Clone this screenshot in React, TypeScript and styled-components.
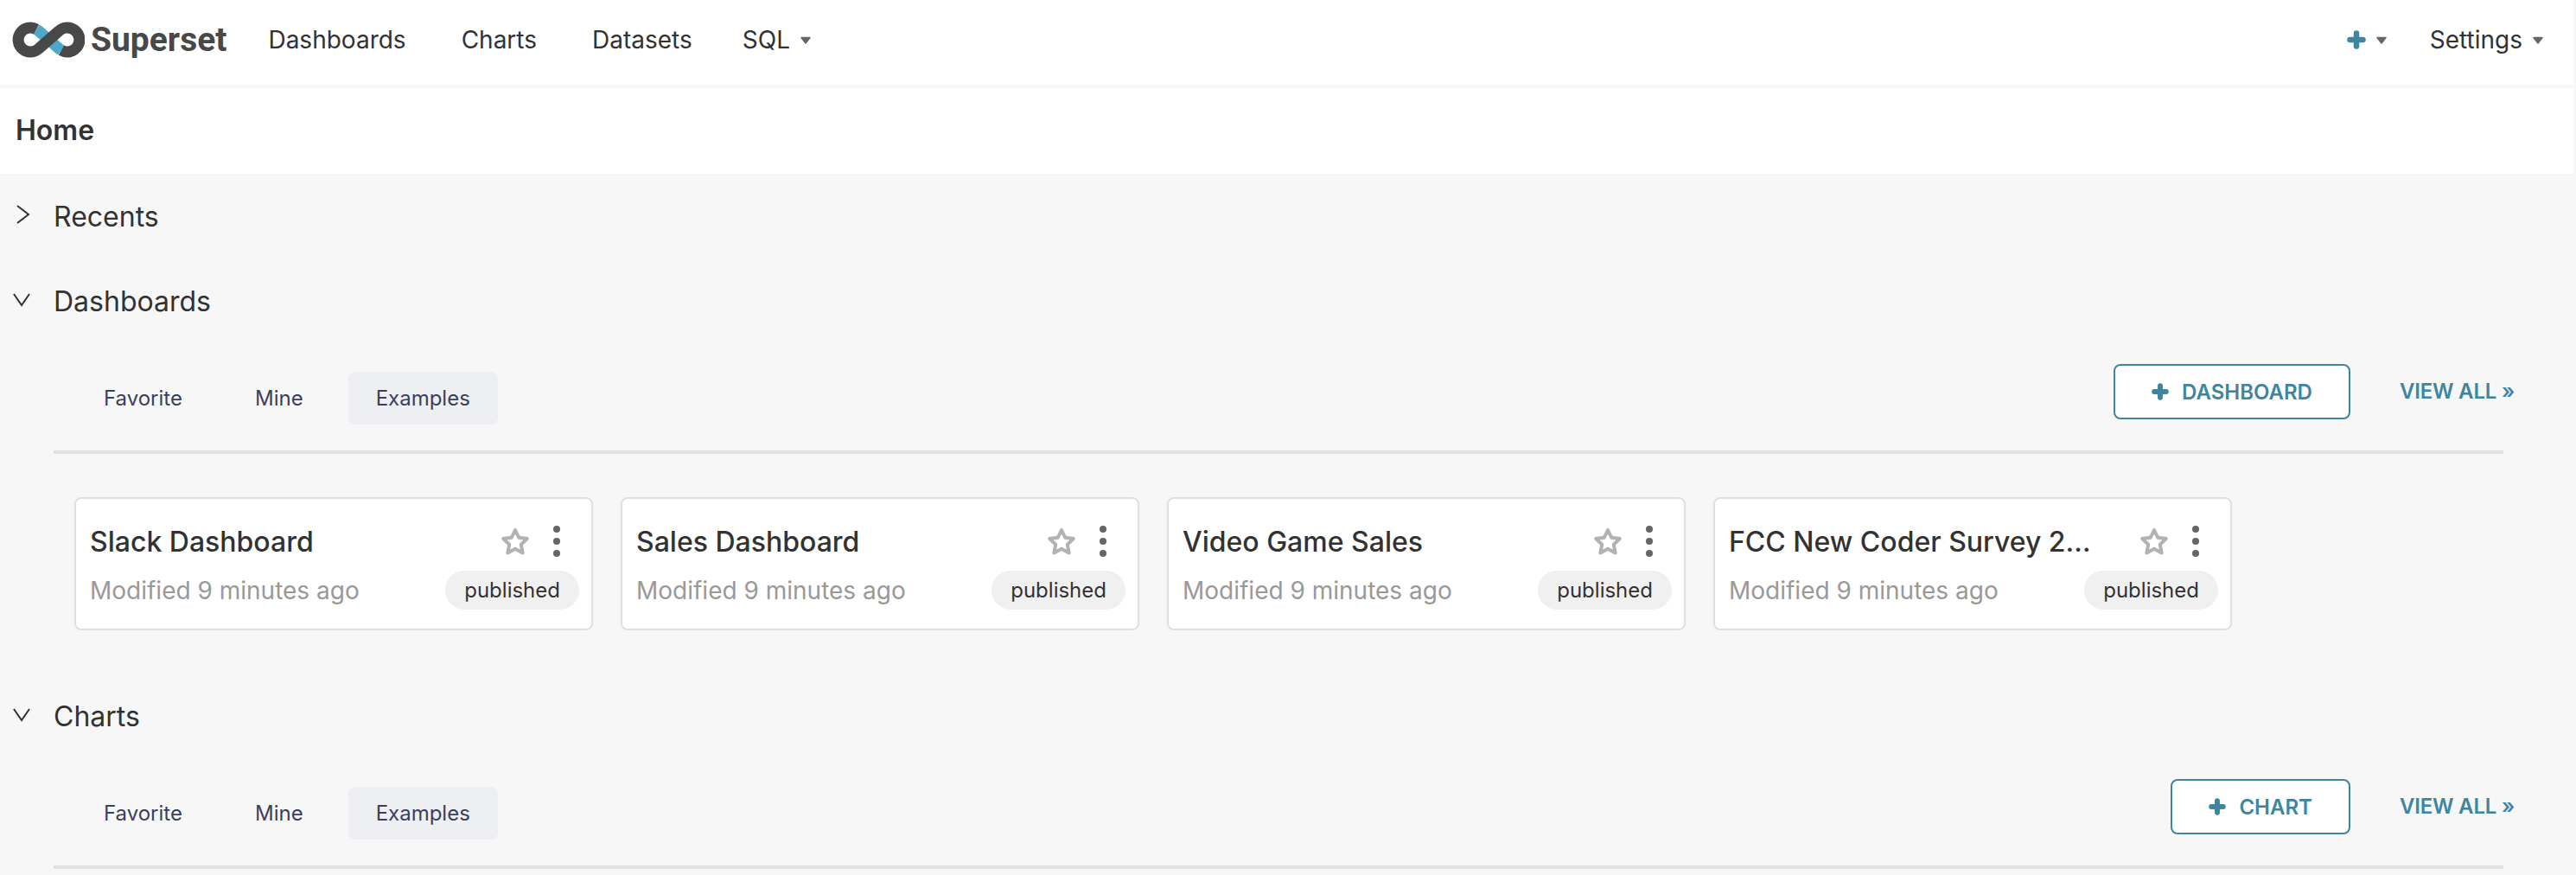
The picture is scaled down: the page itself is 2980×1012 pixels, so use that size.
import styled, { createGlobalStyle } from "styled-components";

const GlobalStyle = createGlobalStyle`
    html, body {
        margin: 0;
        background-color: #f7f7f7;
        overflow: hidden;
    }
    * {
        box-sizing: border-box;
    }
`;

const primary = "#3e86a0";

const Page = styled.div`
    width: 2977px;
    height: 1012px;
    overflow: hidden;
    font-family: Inter, "Liberation Sans", sans-serif;
    color: #323232;
`;

const TopNav = styled.header`
    display: flex;
    align-items: center;
    height: 102px;
    padding: 0 35px 6px 14px;
    background-color: #fff;
    border-bottom: 4px solid #f7f7f7;
`;

const Brand = styled.div`
    display: flex;
    align-items: center;
    gap: 7px;
    margin-right: 48px;
    font-family: Roboto, sans-serif;
    font-weight: 700;
    font-size: 39px;
    color: #484848;
    line-height: 1;
`;

const NavLink = styled.a<{ $gap?: number }>`
    display: flex;
    align-items: center;
    gap: 12px;
    font-size: 28px;
    margin-right: ${(p) => p.$gap ?? 0}px;
    color: #323232;
`;

const Spacer = styled.div`
    flex: 1;
`;

const SubHeader = styled.div`
    display: flex;
    align-items: center;
    height: 99px;
    padding: 0 0 3px 18px;
    background-color: #fff;
    font-size: 32px;
    font-weight: 600;
`;

const SectionHead = styled.div`
    display: flex;
    align-items: center;
    height: 98px;
    padding-left: 62px;
    position: relative;
    font-size: 32px;
`;

const ChevronSlot = styled.span<{ $top: number }>`
    position: absolute;
    left: 14px;
    top: ${(p) => p.$top}px;
    display: flex;
`;

const Section = styled.section`
    height: 480px;
`;

const ActionRow = styled.div`
    display: flex;
    align-items: flex-start;
    height: 104px;
    margin: 24px 81px 0 62px;
    padding-left: 26px;
    border-bottom: 4px solid #e0e0e0;
`;

const Tabs = styled.div`
    display: flex;
    gap: 20px;
    margin-top: 9px;
`;

const Tab = styled.div<{ $active?: boolean }>`
    height: 61px;
    line-height: 61px;
    padding: 0 32px;
    font-size: 24px;
    color: #3a3f5c;
    border-radius: 8px;
    background-color: ${(p) => (p.$active ? "#eeeff3" : "transparent")};
`;

const AddButton = styled.div`
    display: flex;
    align-items: center;
    justify-content: center;
    gap: 15px;
    height: 64px;
    padding: 0 42px;
    background-color: #fff;
    border: 2px solid ${primary};
    border-radius: 8px;
    color: ${primary};
    font-size: 24px;
    font-weight: 600;
`;

const ViewAll = styled.a`
    height: 64px;
    line-height: 63px;
    margin: 0 -13px 0 57px;
    font-size: 24px;
    font-weight: 600;
    letter-spacing: -0.2px;
    color: ${primary};
    white-space: nowrap;
`;

const CardRow = styled.div`
    display: flex;
    gap: 32px;
    margin: 50px 0 0 86px;
`;

const Card = styled.article`
    width: 600px;
    height: 154px;
    padding: 24px 14px 0 16px;
    background-color: #fff;
    border: 2px solid #e0e0e0;
    border-radius: 8px;
`;

const CardTop = styled.div`
    display: flex;
    align-items: center;
    height: 50px;
`;

const CardTitle = styled.div`
    width: 428px;
    font-size: 32px;
    font-weight: 500;
    color: #323232;
    white-space: nowrap;
    overflow: hidden;
    text-overflow: ellipsis;
`;

const CardActions = styled.div`
    display: flex;
    align-items: center;
    gap: 27px;
    margin-left: auto;
    margin-right: 22px;
`;

const CardBottom = styled.div`
    display: flex;
    align-items: center;
    justify-content: space-between;
    margin-top: 9px;
`;

const Modified = styled.span`
    font-size: 28px;
    color: #999;
`;

const Published = styled.span`
    height: 45px;
    line-height: 45px;
    padding: 0 22px;
    border-radius: 23px;
    background-color: #f0f0f0;
    font-size: 24px;
    color: #323232;
`;

const Caret = () => (
    <svg width="12" height="9" viewBox="0 0 12 9">
        <path d="M1 1.5h10L6 8z" fill="#666" stroke="#666" strokeWidth="1.5" strokeLinejoin="round" />
    </svg>
);

const Plus = ({ size }: { size: number }) => (
    <svg width={size} height={size} viewBox="0 0 22 22">
        <path d="M11 3.5v15M3.5 11h15" stroke={primary} strokeWidth="6.5" strokeLinecap="round" />
    </svg>
);

const ChevronRight = () => (
    <svg width="22" height="22" viewBox="0 0 22 22" fill="none">
        <path d="M6 1l13 10L6 21" stroke="#323232" strokeWidth="2" />
    </svg>
);

const ChevronDown = () => (
    <svg width="22" height="16" viewBox="0 0 22 16" fill="none">
        <path d="M2 1l9 13 9-13" stroke="#323232" strokeWidth="2" />
    </svg>
);

const Logo = () => (
    <svg width="84" height="42" viewBox="13 20 84 42" fill="none">
        <path d="M41 28.9L44 31L67 51L70 53.1" stroke="#4fa8c9" strokeWidth="13" />
        <path
            d="M41 28.9A14 14 0 1 0 44 51L67 31A14 14 0 1 1 70 53.1"
            stroke="#484848"
            strokeWidth="13"
        />
    </svg>
);

const Star = () => (
    <svg width="34" height="32" viewBox="0 0 34 32" fill="none">
        <path
            d="M17 3l4.2 8.8 9.6 1.3-7 6.7 1.8 9.6-8.6-4.7-8.6 4.7 1.8-9.6-7-6.7 9.6-1.3z"
            stroke="#b2b2b2"
            strokeWidth="4"
            strokeLinejoin="round"
        />
    </svg>
);

const Dots = () => (
    <svg width="8" height="36" viewBox="0 0 8 36">
        <circle cx="4" cy="4" r="4" fill="#666" />
        <circle cx="4" cy="18" r="4" fill="#666" />
        <circle cx="4" cy="32" r="4" fill="#666" />
    </svg>
);

const dashboards = [
    "Slack Dashboard",
    "Sales Dashboard",
    "Video Game Sales",
    "FCC New Coder Survey 2018",
];

const SectionActions = ({ label }: { label: string }) => (
    <ActionRow>
        <Tabs>
            <Tab>Favorite</Tab>
            <Tab>Mine</Tab>
            <Tab $active>Examples</Tab>
        </Tabs>
        <Spacer />
        <AddButton>
            <Plus size={20} />
            {label}
        </AddButton>
        <ViewAll>VIEW ALL »</ViewAll>
    </ActionRow>
);

const App = () => {
    return (
        <Page>
            <GlobalStyle />
            <TopNav>
                <Brand>
                    <Logo />
                    Superset
                </Brand>
                <NavLink $gap={64}>Dashboards</NavLink>
                <NavLink $gap={64}>Charts</NavLink>
                <NavLink $gap={58}>Datasets</NavLink>
                <NavLink>
                    SQL
                    <Caret />
                </NavLink>
                <Spacer />
                <NavLink $gap={50}>
                    <Plus size={22} />
                    <Caret />
                </NavLink>
                <NavLink>
                    Settings
                    <Caret />
                </NavLink>
            </TopNav>
            <SubHeader>Home</SubHeader>
            <SectionHead>
                <ChevronSlot $top={36}>
                    <ChevronRight />
                </ChevronSlot>
                Recents
            </SectionHead>
            <Section>
                <SectionHead>
                    <ChevronSlot $top={40}>
                        <ChevronDown />
                    </ChevronSlot>
                    Dashboards
                </SectionHead>
                <SectionActions label="DASHBOARD" />
                <CardRow>
                    {dashboards.map((title) => (
                        <Card key={title}>
                            <CardTop>
                                <CardTitle>{title}</CardTitle>
                                <CardActions>
                                    <Star />
                                    <Dots />
                                </CardActions>
                            </CardTop>
                            <CardBottom>
                                <Modified>Modified 9 minutes ago</Modified>
                                <Published>published</Published>
                            </CardBottom>
                        </Card>
                    ))}
                </CardRow>
            </Section>
            <Section>
                <SectionHead>
                    <ChevronSlot $top={40}>
                        <ChevronDown />
                    </ChevronSlot>
                    Charts
                </SectionHead>
                <SectionActions label="CHART" />
            </Section>
        </Page>
    );
};

export default App;
